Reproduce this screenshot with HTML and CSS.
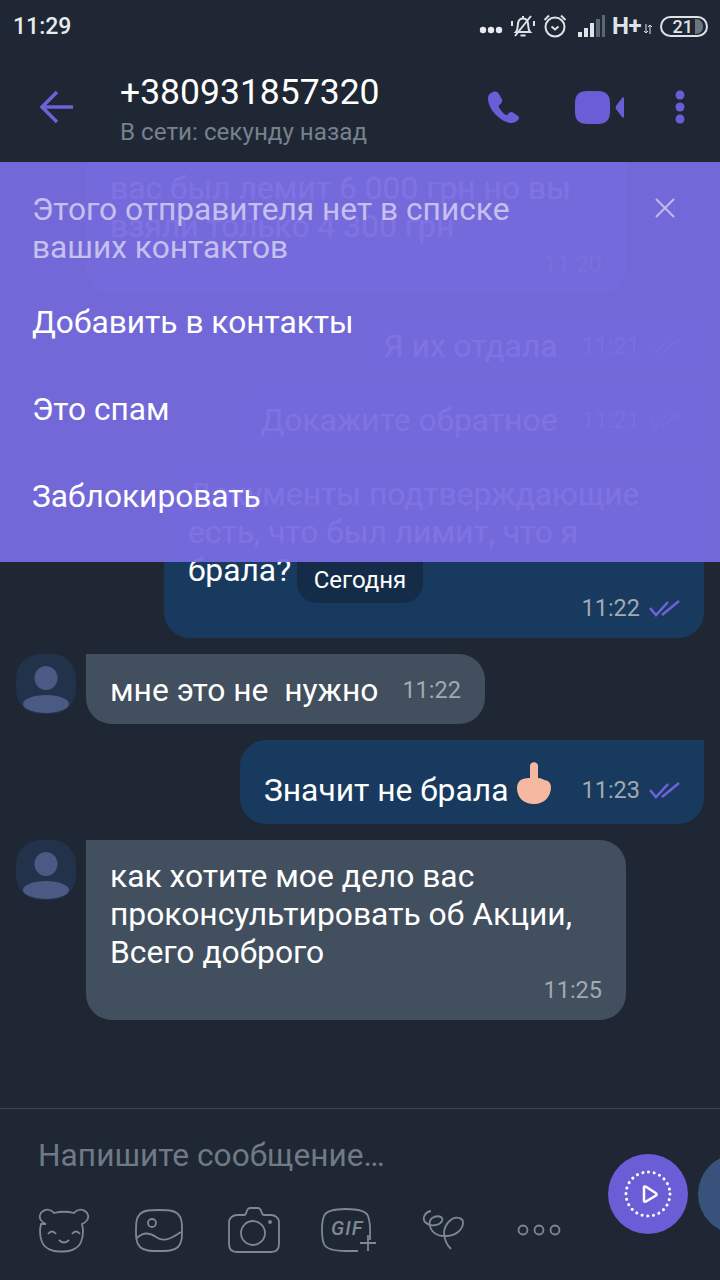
FILE: index.html
```html
<!DOCTYPE html>
<html lang="ru">
<head>
  <meta charset="UTF-8" />
  <meta name="viewport" content="width=device-width, initial-scale=1.0"/>
  <title>Чат</title>
  <link rel="stylesheet" href="styles.css">
</head>
<body>
  <div class="phone">
    <div class="status-bar">
      <span class="clock">11:29</span>
      <div class="status-icons">
        <svg class="st-dots" width="24" height="8" viewBox="0 0 24 8"><circle cx="4" cy="4" r="3.2"/><circle cx="12" cy="4" r="3.2"/><circle cx="20" cy="4" r="3.2"/></svg>
        <svg class="st-bell" width="24" height="24" viewBox="0 0 24 24"><path d="M5 18c2-2 1.500-5 2-8.500C7.500 6 9.500 4.500 12 4.500S16.500 6 17 9.500c.5 3.500 0 6.500 2 8.500zM9.500 21.500h5M12 2v2.500M1 7v5M23 7v5M4 22 20 2"/></svg>
        <svg class="st-alarm" width="24" height="24" viewBox="0 0 24 24"><circle cx="12" cy="13" r="9.500"/><path d="M8.500 12.500 12 15.500l3.500-3M1.500 6 6 1.500M22.500 6 18 1.500"/></svg>
        <svg class="st-signal" width="27" height="22" viewBox="0 0 27 22"><rect x="0" y="17" width="4" height="5" fill="#dfe3e8"/><rect x="6" y="13" width="4" height="9" fill="#dfe3e8"/><rect x="12" y="8" width="4" height="14" fill="#dfe3e8"/><rect x="18" y="4" width="4" height="18" fill="#5c6672"/><rect x="24" y="0" width="3" height="22" fill="#5c6672"/></svg>
        <span class="net">H+</span>
        <svg class="st-arrows" width="8" height="10" viewBox="0 0 8 10"><path d="M2 0v9M0 7l2 2 2-2M6 10V1M4 3l2-2 2 2"/></svg>
        <div class="battery"><span>21</span><i class="battery-level"></i></div>
      </div>
    </div>

    <div class="top-bar">
      <svg class="back" width="34" height="34" viewBox="0 0 34 34"><path d="M33 17H3M17 2 2 17l15 15"/></svg>
      <div class="contact">
        <div class="contact-name">+380931857320</div>
        <div class="contact-status">В сети: секунду назад</div>
      </div>
      <div class="top-actions">
        <svg width="33" height="33" viewBox="0 0 33 33"><path d="M6 1C3 2 1 4 1 7c0 6 3 12 8 17 4 4 9 7 14 8 3 .5 6-1 8-3 1.500-1.500 1.500-3 0-4l-5-3.500c-1.500-1-3-.5-4 .5l-1.500 1.500c-1 1-2 .5-3-.5-2-1.500-4-4-5.500-6.500-.5-1-.5-2 .5-2.500l1.500-1.500c1-1 1.500-2.500 1-4L12 3C11 1 8.500 0 6 1z"/></svg>
        <svg class="video" width="50" height="33" viewBox="0 0 50 33"><path d="M12 0h11c8 0 12 4 12 12v9c0 8-4 12-12 12H12C4 33 0 29 0 21v-9C0 4 4 0 12 0zM49 7v19c0 1-1 1-2 0l-6-8c-.5-1-.5-2 0-3l6-8c1-1 2-1 2 0z"/></svg>
        <svg width="10" height="34" viewBox="0 0 10 34"><circle cx="5" cy="5" r="4.500"/><circle cx="5" cy="17" r="4.500"/><circle cx="5" cy="29" r="4.500"/></svg>
      </div>
    </div>

    <div class="chat">
      <div class="messages">
        <div class="row">
          <div class="avatar-slot"></div>
          <div class="bubble in cut">
            <p>вас был лемит 6 000 грн но вы<br>взяли только 4 300 грн</p>
            <div class="meta">11:20</div>
          </div>
        </div>
        <div class="row out">
          <div class="bubble sent inline">
            <p>Я их отдала</p>
            <div class="meta">11:21 <svg class="ticks" width="31" height="17" viewBox="0 0 31 17"><path d="M1 8l6 7L19 2M13 15 30 1"/></svg></div>
          </div>
        </div>
        <div class="row out next">
          <div class="bubble sent inline">
            <p>Докажите обратное</p>
            <div class="meta">11:21 <svg class="ticks" width="31" height="17" viewBox="0 0 31 17"><path d="M1 8l6 7L19 2M13 15 30 1"/></svg></div>
          </div>
        </div>
        <div class="row out next">
          <div class="bubble sent wide">
            <p>Документы подтверждающие<br>есть, что был лимит, что я<br>брала?</p>
            <div class="meta">11:22 <svg class="ticks" width="31" height="17" viewBox="0 0 31 17"><path d="M1 8l6 7L19 2M13 15 30 1"/></svg></div>
          </div>
        </div>
        <div class="row">
          <svg class="avatar" width="60" height="60" viewBox="0 0 60 60"><rect width="60" height="60" rx="24" fill="#22324a"/><ellipse cx="30" cy="24" rx="11.500" ry="12"/><ellipse cx="30" cy="50" rx="23" ry="9"/></svg>
          <div class="bubble in inline">
            <p>мне это не  нужно</p>
            <div class="meta">11:22</div>
          </div>
        </div>
        <div class="row out">
          <div class="bubble sent inline tall">
            <p>Значит не брала<svg class="emoji" width="36" height="42" viewBox="0 0 36 42"><path d="M14 4c0-5 8-5 8 0v12c3 0 5 1 6 2 4 0 7 3 7 7 0 9-6 17-17 17S1 35 1 26c0-4 2-8 6-9 2-1 5-1 7-1z"/></svg></p>
            <div class="meta">11:23 <svg class="ticks" width="31" height="17" viewBox="0 0 31 17"><path d="M1 8l6 7L19 2M13 15 30 1"/></svg></div>
          </div>
        </div>
        <div class="row">
          <svg class="avatar" width="60" height="60" viewBox="0 0 60 60"><rect width="60" height="60" rx="24" fill="#22324a"/><ellipse cx="30" cy="24" rx="11.500" ry="12"/><ellipse cx="30" cy="50" rx="23" ry="9"/></svg>
          <div class="bubble in">
            <p>как хотите мое дело вас проконсультировать об Акции, Всего доброго</p>
            <div class="meta">11:25</div>
          </div>
        </div>
      </div>

      <div class="date-pill">Сегодня</div>

      <div class="banner">
        <div class="banner-head">
          <div class="banner-title">Этого отправителя нет в списке ваших контактов</div>
          <svg class="banner-close" width="22" height="22" viewBox="0 0 22 22"><path d="M2 2l18 18M20 2 2 20"/></svg>
        </div>
        <div class="banner-action">Добавить в контакты</div>
        <div class="banner-action">Это спам</div>
        <div class="banner-action">Заблокировать</div>
      </div>
    </div>

    <div class="composer">
      <div class="placeholder">Напишите сообщение…</div>
      <div class="tools">
        <div class="tool">
          <svg width="52" height="46" viewBox="0 0 52 46"><path d="M8 17C3 15 1 11 2 8c1-4 6-6 9.500-5 2 .5 3.500 1.500 4.500 3 6-1.500 14-1.500 20 0 1-1.500 2.500-2.500 4.500-3 3.500-1 8.500 1 9.500 5 1 3-1 7-6 9 1.500 6 1 13-1 18-3 7-11 9.500-17 9.500h-5c-6 0-14-2.500-17-9.500-2-5-2.500-12-1-18zM10 27q4-5 8 0M34 27q4-5 8 0M21 33q5 5 10 0"/></svg>
        </div>
        <div class="tool">
          <svg width="48" height="43" viewBox="0 0 48 43"><path d="M24 1c8 0 15 0 19 4s4 10 4 16.500 0 12.500-4 16.500-11 4-19 4-15 0-19-4-4-10-4-16.500S1 9 5 5s11-4 19-4zM2 29c6-6 12-6 19-1 7 5 13 3 25-5"/><circle cx="17" cy="14" r="4"/></svg>
        </div>
        <div class="tool">
          <svg width="52" height="46" viewBox="0 0 52 46"><path d="M9 8h7c1 0 2-1 2.500-3 .5-2 2-4 4-4h7c2 0 3.500 2 4 4 .5 2 1.500 3 2.500 3h7c4 0 8 3 8 7v22c0 5-3 8-8 8H9c-5 0-8-3-8-8V15c0-4 4-7 8-7z"/><circle cx="25" cy="26" r="12"/><circle cx="42" cy="15" r="1"/></svg>
        </div>
        <div class="tool">
          <svg width="56" height="46" viewBox="0 0 56 46"><path d="M49 33c0-8 1-16-2-24-2-5-10-7-22-7S5 4 3 9c-2 5-2 9-2 14s0 9 2 14c2 5 10 7 22 7h12M39 36h16M47 28v16"/><text x="10" y="28" class="gif">GIF</text></svg>
        </div>
        <div class="tool">
          <svg width="44" height="40" viewBox="0 0 44 40"><path d="M9 1C3 2 0 8 3 12c5 5 14 4 17-1 2-5-5-6-10-3-4 3-3 12 4 16 5 3 16 3 22-2 6-5 7-13 1-14-7-2-14 6-15 14 0 8 4 14 7 17"/></svg>
        </div>
        <div class="tool">
          <svg width="44" height="12" viewBox="0 0 44 12"><circle cx="6" cy="6" r="4.500"/><circle cx="22" cy="6" r="4.500"/><circle cx="38" cy="6" r="4.500"/></svg>
        </div>
      </div>
      <div class="record">
        <svg width="48" height="48" viewBox="0 0 48 48"><circle class="ring" cx="24" cy="24" r="22"/><path d="M20 17.500v13c0 1.200 1 1.600 2 1l10-6c.8-.5.8-1.700 0-2.200l-10-6.600c-1-.6-2-.2-2 .8z"/></svg>
      </div>
      <div class="record-next"></div>
    </div>
  </div>
</body>
</html>
```

FILE: styles.css
```css
* {
  box-sizing: border-box;
}

body {
  margin: 0;
  background: #1e2733;
  font-family: Roboto, 'Noto Sans', sans-serif;
  color: #fff;
}

.phone {
  position: relative;
  display: flex;
  flex-direction: column;
  width: 720px;
  height: 1280px;
  overflow: hidden;
  background: #1e2733;
}

/* status bar */
.status-bar {
  display: flex;
  align-items: center;
  justify-content: space-between;
  height: 52px;
  padding: 0 12px 0 13px;
  flex-shrink: 0;
}

.clock {
  font-size: 23px;
  font-weight: 500;
  color: #e8ebee;
}

.status-icons {
  display: flex;
  align-items: center;
  gap: 8px;
  color: #dfe3e8;
}

.status-icons svg {
  fill: none;
  stroke: #dfe3e8;
  stroke-width: 2;
}

.status-icons .st-dots {
  margin-top: 8px;
  fill: #e8ebee;
  stroke: none;
}

.status-icons .st-signal {
  margin-left: 3px;
  stroke: none;
}

.status-icons .st-arrows {
  margin: 6px 0 0 -5px;
  stroke-width: 1;
}

.net {
  margin-left: -1px;
  font-size: 24px;
  font-weight: 700;
  letter-spacing: -0.5px;
}

.battery {
  display: flex;
  align-items: center;
  justify-content: flex-end;
  gap: 2px;
  width: 48px;
  height: 21px;
  padding-right: 3px;
  border: 2px solid #dfe3e8;
  border-radius: 11px;
  font-size: 18px;
  font-weight: 500;
}

.battery-level {
  width: 8px;
  height: 15px;
  background: #6b7581;
  border-radius: 0 7px 7px 0;
}

/* header */
.top-bar {
  display: flex;
  align-items: center;
  height: 110px;
  padding: 0 35px 0 40px;
  flex-shrink: 0;
}

.back {
  margin-right: 46px;
  fill: none;
  stroke: #6f62d8;
  stroke-width: 3.500;
}

.contact {
  flex: 1;
  margin-top: 2px;
}

.contact-name {
  font-size: 35.500px;
  line-height: 44px;
}

.contact-status {
  margin-top: 4px;
  font-size: 24.200px;
  line-height: 28px;
  color: #77818d;
}

.top-actions {
  display: flex;
  align-items: center;
  gap: 55px;
  fill: #6a5dd6;
}

.top-actions .video {
  margin-right: -5px;
}

/* messages */
.chat {
  position: relative;
  flex: 1;
  min-height: 0;
  overflow: hidden;
}

.messages {
  display: flex;
  flex-direction: column;
  justify-content: flex-end;
  gap: 16px;
  height: 100%;
  padding: 0 16px 88px;
}

.row {
  display: flex;
  gap: 10px;
  flex-shrink: 0;
}

.row.out {
  justify-content: flex-end;
}

.row.next {
  margin-top: -12px;
}

.avatar {
  flex-shrink: 0;
  fill: #4a5a84;
}

.avatar-slot {
  width: 60px;
  flex-shrink: 0;
}

.bubble {
  max-width: 540px;
  padding: 17px 24px 11px 24px;
  border-radius: 26px;
  font-size: 31.800px;
  line-height: 38px;
}

.bubble p {
  margin: 0;
  white-space: pre-wrap;
}

.bubble.in {
  background: #424f5e;
  border-top-left-radius: 0;
}

.bubble.sent {
  background: #173a5e;
  border-top-right-radius: 0;
}

.bubble.wide {
  width: 540px;
}

.bubble.cut {
  width: 540px;
  padding-top: 55px;
}

.bubble.inline {
  display: flex;
  align-items: center;
  gap: 24px;
  padding-bottom: 15px;
}

.bubble.tall {
  padding-top: 31px;
  padding-bottom: 15px;
}

.meta {
  display: flex;
  align-items: center;
  justify-content: flex-end;
  gap: 9px;
  height: 38px;
  font-size: 23.500px;
  color: #a1a9b2;
}

.ticks {
  fill: none;
  stroke: #6f62d8;
  stroke-width: 2.500;
}

.emoji {
  margin: -26px 5px -6px 8px;
  vertical-align: middle;
  fill: #f6b8a0;
}

.date-pill {
  position: absolute;
  top: 382px;
  left: 297px;
  width: 126px;
  height: 59px;
  padding-top: 18px;
  background: #142c47;
  border-radius: 20px;
  font-size: 24px;
  line-height: 36px;
  text-align: center;
}

/* banner over the chat */
.banner {
  position: absolute;
  top: 0;
  left: 0;
  width: 100%;
  height: 400px;
  padding: 29px 32px 0;
  background: rgba(120, 107, 225, 0.95);
}

.banner-head {
  display: flex;
  justify-content: space-between;
  margin-bottom: 12px;
}

.banner-title {
  width: 500px;
  font-size: 31.700px;
  line-height: 38px;
  color: #c5c0ee;
}

.banner-close {
  margin: 6px 12px 0 0;
  fill: none;
  stroke: #c0baee;
  stroke-width: 2;
}

.banner-action {
  height: 87px;
  font-size: 31.700px;
  line-height: 87px;
}

/* composer */
.composer {
  position: relative;
  height: 172px;
  flex-shrink: 0;
  border-top: 1px solid #3d4651;
}

.placeholder {
  padding: 28px 0 0 38px;
  font-size: 31.700px;
  line-height: 38px;
  color: #6f7a86;
}

.tools {
  display: flex;
  align-items: center;
  height: 46px;
  margin-top: 32px;
  padding-left: 16px;
}

.tool {
  display: flex;
  align-items: center;
  justify-content: center;
  width: 95px;
}

.tool svg {
  fill: none;
  stroke: #7e8892;
  stroke-width: 1.800;
}

.tool .gif {
  fill: #7e8892;
  stroke: none;
  font-family: Roboto, sans-serif;
  font-size: 20px;
  font-style: italic;
  font-weight: 500;
  letter-spacing: 1px;
}

.record {
  position: absolute;
  top: 45px;
  left: 608px;
  display: flex;
  align-items: center;
  justify-content: center;
  width: 80px;
  height: 80px;
  background: #6a5dd6;
  border-radius: 50%;
}

.record svg {
  fill: none;
  stroke: #fff;
  stroke-width: 2.500;
}

.record .ring {
  stroke-width: 3;
  stroke-dasharray: 0.100 5.650;
  stroke-linecap: round;
}

.record-next {
  position: absolute;
  top: 45px;
  left: 698px;
  width: 80px;
  height: 80px;
  background: #38527c;
  border-radius: 50%;
}
```
